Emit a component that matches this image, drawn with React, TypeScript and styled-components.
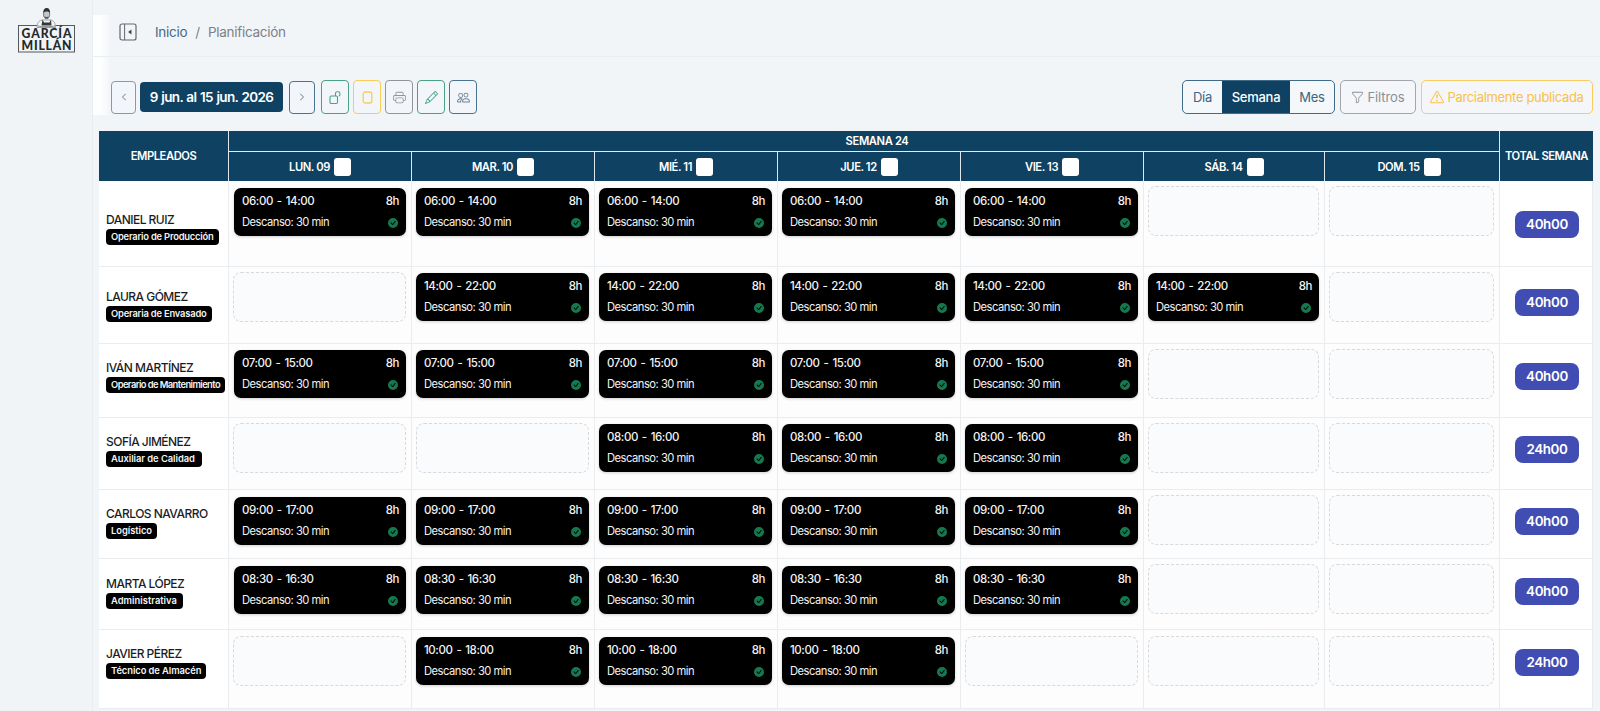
import React from "react";
import styled, { createGlobalStyle } from "styled-components";
import {
  BsCheckCircleFill,
  BsChevronLeft,
  BsChevronRight,
  BsExclamationTriangle,
  BsFunnel,
  BsPencil,
  BsPeople,
  BsPrinter,
} from "react-icons/bs";

const navy = "#0f4262";

const GlobalStyle = createGlobalStyle`
  * { box-sizing: border-box; }
  body {
    margin: 0;
    background: #f2f5f8;
    font-family: Inter, "Liberation Sans", sans-serif;
    color: #1b1c1f;
    overflow: hidden;
  }
`;

const Page = styled.div`
  display: flex;
  width: 100%;
  height: 711px;
`;

const Sidebar = styled.aside`
  width: 93px;
  flex: none;
  padding: 7px 0 0 17px;
  background: #f0f4f7;
  border-right: 1px solid #e9edf1;
`;

const Main = styled.main`
  flex: 1;
  min-width: 0;
  display: flex;
  flex-direction: column;
  background: linear-gradient(90deg, #fdfefe 8px, #fdfefe00) 0 15px / 18px 100px no-repeat, #f2f5f8;
`;

const TopBar = styled.header`
  height: 57px;
  flex: none;
  display: flex;
  align-items: center;
  padding: 7px 0 0 26px;
  border-bottom: 1px solid #eaeef1;
`;

const Breadcrumb = styled.nav`
  display: flex;
  gap: 8px;
  margin-left: 18px;
  font-size: 13.5px;
  letter-spacing: -0.28px;
  color: #7b8188;
`;

const Crumb = styled.span<{ $link?: boolean }>`
  color: ${(p) => (p.$link ? "#456a85" : "#7b8188")};
`;

const Toolbar = styled.div`
  display: flex;
  align-items: center;
  height: 74px;
  padding: 6px 7px 0 18px;
`;

const IconGroup = styled.div`
  display: flex;
  gap: 4px;
  margin-left: 6px;
`;

const IconButton = styled.button<{ $color: string; $w?: number; $h?: number }>`
  width: ${(p) => p.$w ?? 28}px;
  height: ${(p) => p.$h ?? 34}px;
  padding: 0;
  display: flex;
  align-items: center;
  justify-content: center;
  border: 1px solid ${(p) => p.$color};
  border-radius: 4px;
  background: #f2f6fa;
  color: ${(p) => p.$color};
`;

const DateButton = styled.button`
  width: 143px;
  height: 30px;
  margin: 0 6px 0 4px;
  padding: 0;
  border: 0;
  border-radius: 4px;
  background: ${navy};
  color: #fff;
  font: 600 13.5px Inter, sans-serif;
  letter-spacing: -0.64px;
  word-spacing: 0.8px;
  white-space: nowrap;
`;

const RightTools = styled.div`
  display: flex;
  gap: 5px;
  margin-left: auto;
`;

const Segmented = styled.div`
  display: flex;
  width: 153px;
  height: 34px;
  border: 1px solid #3f6b88;
  border-radius: 5px;
  overflow: hidden;
  background: #f4f8fb;
`;

const Segment = styled.button<{ $w: number; $active?: boolean }>`
  width: ${(p) => p.$w}px;
  padding: 0;
  border: 0;
  background: ${(p) => (p.$active ? navy : "transparent")};
  color: ${(p) => (p.$active ? "#fff" : "#3d6480")};
  font: ${(p) => (p.$active ? 500 : 400)} 13px Inter, sans-serif;
  letter-spacing: -0.25px;
`;

const OutlineButton = styled.button<{ $color: string; $border: string; $w: number; $track: number }>`
  width: ${(p) => p.$w}px;
  height: 34px;
  padding: 0;
  display: flex;
  align-items: center;
  justify-content: center;
  gap: 3px;
  border: 1px solid ${(p) => p.$border};
  border-radius: 5px;
  background: #f4f6f9;
  color: ${(p) => p.$color};
  font: 400 13px Inter, sans-serif;
  letter-spacing: ${(p) => p.$track}px;
  white-space: nowrap;
`;

const Planner = styled.div`
  margin-left: 6px;
  width: 1494px;
  display: grid;
  grid-template-columns: 130px repeat(5, 183px) 181px 175px 93px;
  grid-template-rows: 21px 29px 86px 77px 74px 72px 69px 71px 79px;
  background: #fff;
`;

const HeadCell = styled.div<{ $last?: boolean }>`
  display: flex;
  align-items: center;
  justify-content: center;
  gap: 4px;
  background: ${navy};
  border-right: ${(p) => (p.$last ? "0" : "1px solid #dfe7ed")};
  color: #fff;
  font-weight: 600;
  font-size: 11.2px;
  letter-spacing: -0.42px;
  white-space: nowrap;
`;

const TallHead = styled(HeadCell)`
  grid-row: span 2;
`;

const WeekHead = styled(HeadCell)`
  grid-column: span 7;
  padding-left: 26px;
  border-bottom: 1px solid #e6ecf1;
  letter-spacing: -0.38px;
`;

const DayHead = styled(HeadCell)`
  letter-spacing: -0.4px;

  &:nth-child(10) {
    padding-right: 6px;
  }
`;

const Check = styled.span`
  width: 17px;
  height: 18px;
  border-radius: 3px;
  background: #fff;
`;

const Cell = styled.div<{ $top: number; $first?: boolean }>`
  padding: ${(p) => p.$top}px ${(p) => (p.$first ? 5 : 5)}px 0 ${(p) => (p.$first ? 5 : 4)}px;
  border-right: 1px solid #e9edf0;
  border-bottom: 1px solid #e9edf0;
  background: #fdfdfe;
`;

const EmployeeCell = styled(Cell)`
  padding-left: 7px;
  padding-right: 0;
  background: #fff;
`;

const TotalCell = styled(Cell)`
  padding-left: 15px;
  background: #fff;
`;

const Name = styled.div`
  height: 16px;
  font-size: 12px;
  line-height: 16px;
  font-weight: 500;
  letter-spacing: -0.53px;
  white-space: nowrap;
`;

const Role = styled.div<{ $w: number; $track: number }>`
  width: ${(p) => p.$w}px;
  height: 16px;
  margin-top: 1px;
  padding-left: 5px;
  border-radius: 4px;
  background: #000;
  color: #f4f4f4;
  font-size: 9.4px;
  font-weight: 600;
  line-height: 16px;
  letter-spacing: ${(p) => p.$track}px;
  white-space: nowrap;
`;

const Shift = styled.div`
  height: 48px;
  display: grid;
  grid-template-columns: 1fr auto;
  grid-template-rows: 20px 21px;
  align-items: center;
  align-content: start;
  padding: 3px 7px 0 8px;
  border-radius: 7px;
  background: #000;
  color: #f3f3f3;
  box-shadow: 0 1px 3px rgba(0, 0, 0, 0.18);
  white-space: nowrap;
`;

const Hours = styled.span`
  font-size: 11.5px;
  font-weight: 500;
  letter-spacing: -0.42px;
  word-spacing: 1.3px;
`;

const Rest = styled.span`
  padding-top: 1px;
  font-size: 11.2px;
  letter-spacing: -0.5px;
`;

const Done = styled.span`
  display: flex;
  justify-content: flex-end;
  padding: 2px 1px 0 0;
  color: #15794f;
`;

const Empty = styled.div`
  height: 50px;
  border: 1px dashed #d6dadd;
  border-radius: 8px;
  background: #fafbfc;
`;

const Total = styled.div`
  width: 64px;
  height: 27px;
  border-radius: 8px;
  background: #414db3;
  color: #fff;
  font-size: 13.4px;
  font-weight: 600;
  line-height: 27px;
  text-align: center;
  letter-spacing: -0.35px;
`;

const days = ["LUN. 09", "MAR. 10", "MIÉ. 11", "JUE. 12", "VIE. 13", "SÁB. 14", "DOM. 15"];

interface Employee {
  name: string;
  role: string;
  roleWidth: number;
  roleTrack: number;
  shift: string;
  worked: number[];
  total: string;
  pad: { name: number; card: number; empty: number; total: number };
}

const employees: Employee[] = [
  { name: "DANIEL RUIZ", role: "Operario de Producción", roleWidth: 113, roleTrack: -0.22, shift: "06:00 - 14:00", worked: [0, 1, 2, 3, 4], total: "40h00", pad: { name: 31, card: 7, empty: 5, total: 30 } },
  { name: "LAURA GÓMEZ", role: "Operaria de Envasado", roleWidth: 106, roleTrack: -0.2, shift: "14:00 - 22:00", worked: [1, 2, 3, 4, 5], total: "40h00", pad: { name: 22, card: 6, empty: 5, total: 22 } },
  { name: "IVÁN MARTÍNEZ", role: "Operario de Mantenimiento", roleWidth: 119, roleTrack: -0.58, shift: "07:00 - 15:00", worked: [0, 1, 2, 3, 4], total: "40h00", pad: { name: 16, card: 6, empty: 5, total: 19 } },
  { name: "SOFÍA JIMÉNEZ", role: "Auxiliar de Calidad", roleWidth: 96, roleTrack: -0.05, shift: "08:00 - 16:00", worked: [2, 3, 4], total: "24h00", pad: { name: 16, card: 6, empty: 5, total: 18 } },
  { name: "CARLOS NAVARRO", role: "Logístico", roleWidth: 51, roleTrack: -0.05, shift: "09:00 - 17:00", worked: [0, 1, 2, 3, 4], total: "40h00", pad: { name: 16, card: 7, empty: 5, total: 18 } },
  { name: "MARTA LÓPEZ", role: "Administrativa", roleWidth: 77, roleTrack: 0.02, shift: "08:30 - 16:30", worked: [0, 1, 2, 3, 4], total: "40h00", pad: { name: 17, card: 7, empty: 5, total: 19 } },
  { name: "JAVIER PÉREZ", role: "Técnico de Almacén", roleWidth: 100, roleTrack: -0.08, shift: "10:00 - 18:00", worked: [1, 2, 3], total: "24h00", pad: { name: 16, card: 7, empty: 6, total: 19 } },
];

function Logo() {
  return (
    <svg width="60" height="48" viewBox="0 0 60 48" fill="none">
      <rect x="1.5" y="18.5" width="56" height="26.5" stroke="#55595c" />
      <path d="M20 20.5c0-4 1.500-7 5-7.500h8.500c3.500.5 5 3.500 5 7.500z" fill="#f3f5f6" stroke="#8a8e91" strokeWidth=".8" />
      <path d="M25.500 12.500l1.500 3h5.500l1.500-3 .5 6h-10z" fill="#35393c" />
      <path d="M21 19c3 .8 13 .8 17 0" stroke="#85898c" />
      <ellipse cx="29.600" cy="7" rx="3.100" ry="4.600" fill="#c3c6c8" stroke="#4c5053" strokeWidth=".7" />
      <path d="M26.400 6c-.4-3 1-5 3.300-5s3.700 2 3.200 5c-.8-2-5.500-2-6.500 0z" fill="#2d3133" />
      <path d="M27.500 9.500c1 .6 3.200.6 4.200 0l-.6 2h-3z" fill="#55595c" />
      <g fill="#25282a" fontFamily="Lato, sans-serif" fontWeight="900" fontSize="12.2">
        <text x="4.500" y="31" textLength="50" lengthAdjust="spacing">GARCÍA</text>
        <text x="4.500" y="43" textLength="50" lengthAdjust="spacing">MILLÁN</text>
      </g>
    </svg>
  );
}

function PanelIcon() {
  return (
    <svg width="18" height="18" viewBox="0 0 18 18" fill="none" stroke="#62686d">
      <rect x="1" y="1" width="16" height="16" rx="2" strokeWidth="1.200" />
      <path d="M5.600 1v16" />
      <path d="M12.500 6.500v5L9 9z" fill="#44494d" stroke="none" />
    </svg>
  );
}

function UnlockIcon() {
  return (
    <svg width="14" height="15" viewBox="0 0 14 15" fill="none" stroke="currentColor" strokeWidth="1.100">
      <rect x="2" y="6" width="7.500" height="7.500" rx="1.200" />
      <path d="M7.500 6V3.400c0-1 .7-1.700 1.700-1.700h1c1 0 1.700.7 1.700 1.700v1.400c0 .8-.5 1.200-1.200 1.200" />
    </svg>
  );
}

function SheetIcon() {
  return (
    <svg width="11" height="13" viewBox="0 0 11 13" fill="none" stroke="currentColor" strokeWidth="1.300">
      <rect x="1.200" y="1" width="8.600" height="11" rx="2" />
    </svg>
  );
}

export default function App() {
  return (
    <>
      <GlobalStyle />
      <Page>
        <Sidebar>
          <Logo />
        </Sidebar>
        <Main>
          <TopBar>
            <PanelIcon />
            <Breadcrumb>
              <Crumb $link>Inicio</Crumb>
              <Crumb>/</Crumb>
              <Crumb>Planificación</Crumb>
            </Breadcrumb>
          </TopBar>
          <Toolbar>
            <IconButton $color="#7f9bb0" $w={25} $h={33}><BsChevronLeft size={8} color="#4f5b65" /></IconButton>
            <DateButton>9 jun. al 15 jun. 2026</DateButton>
            <IconButton $color="#4a7391" $w={26} $h={33}><BsChevronRight size={8} color="#4f5b65" /></IconButton>
            <IconGroup>
              <IconButton $color="#48a283"><UnlockIcon /></IconButton>
              <IconButton $color="#f9cc55"><SheetIcon /></IconButton>
              <IconButton $color="#92969b"><BsPrinter size={13} /></IconButton>
              <IconButton $color="#48a283"><BsPencil size={13} /></IconButton>
              <IconButton $color="#4a7391"><BsPeople size={13} color="#6b7f8e" /></IconButton>
            </IconGroup>
            <RightTools>
              <Segmented>
                <Segment $w={39}>Día</Segment>
                <Segment $w={68} $active>Semana</Segment>
                <Segment $w={44}>Mes</Segment>
              </Segmented>
              <OutlineButton $w={76} $color="#8b9096" $border="#a1a6ab" $track={-0.1}>
                <BsFunnel size={13} />Filtros
              </OutlineButton>
              <OutlineButton $w={172} $color="#f8c14a" $border="#f9cc60" $track={-0.33}>
                <BsExclamationTriangle size={14} />Parcialmente publicada
              </OutlineButton>
            </RightTools>
          </Toolbar>
          <Planner>
            <TallHead>EMPLEADOS</TallHead>
            <WeekHead>SEMANA 24</WeekHead>
            <TallHead $last>TOTAL SEMANA</TallHead>
            {days.map((day) => (
              <DayHead key={day}>
                {day}
                <Check />
              </DayHead>
            ))}
            {employees.map((e) => (
              <React.Fragment key={e.name}>
                <EmployeeCell $top={e.pad.name}>
                  <Name>{e.name}</Name>
                  <Role $w={e.roleWidth} $track={e.roleTrack}>{e.role}</Role>
                </EmployeeCell>
                {days.map((day, i) =>
                  e.worked.includes(i) ? (
                    <Cell key={day} $top={e.pad.card} $first={i === 0}>
                      <Shift>
                        <Hours>{e.shift}</Hours>
                        <Hours>8h</Hours>
                        <Rest>Descanso: 30 min</Rest>
                        <Done><BsCheckCircleFill size={10} /></Done>
                      </Shift>
                    </Cell>
                  ) : (
                    <Cell key={day} $top={e.pad.empty}>
                      <Empty />
                    </Cell>
                  )
                )}
                <TotalCell $top={e.pad.total}>
                  <Total>{e.total}</Total>
                </TotalCell>
              </React.Fragment>
            ))}
          </Planner>
        </Main>
      </Page>
    </>
  );
}
